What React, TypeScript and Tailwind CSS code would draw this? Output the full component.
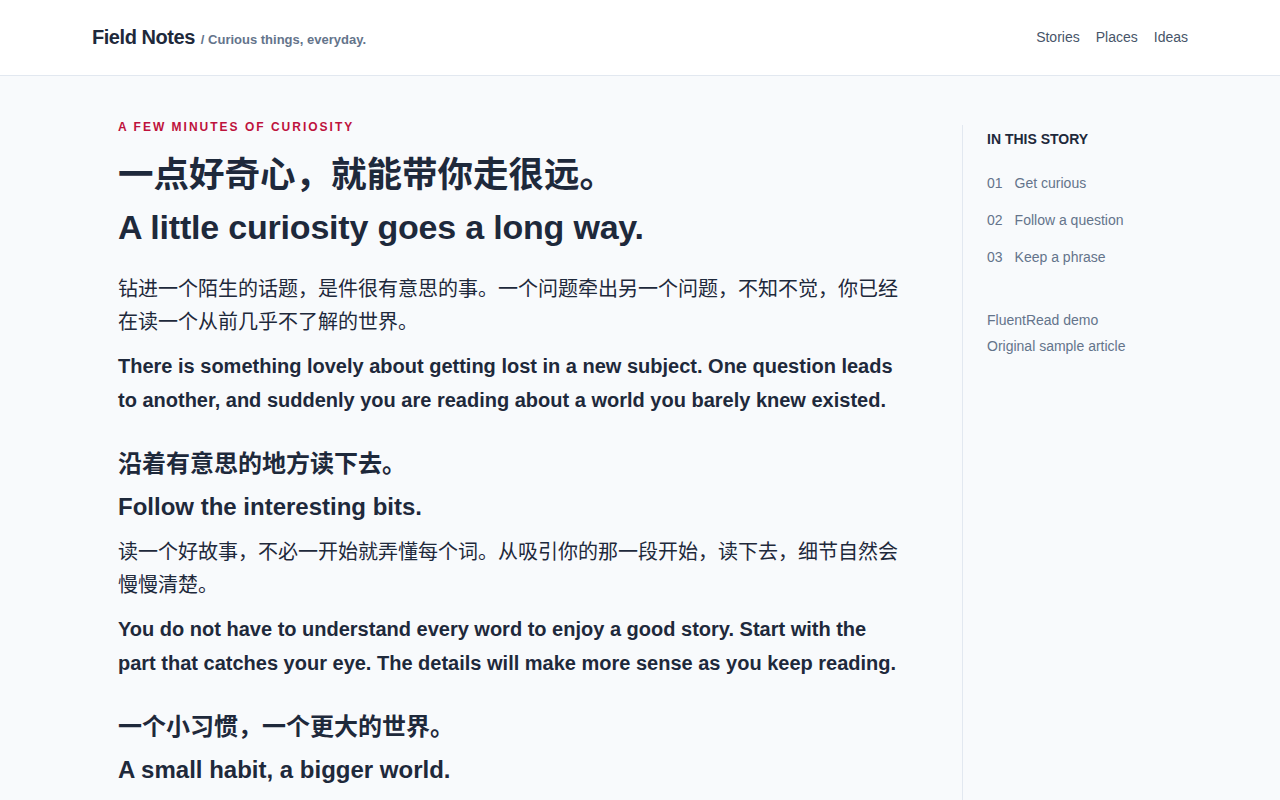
const font = { fontFamily: '"Liberation Sans", Arial, "Noto Sans CJK SC", sans-serif' };

const toc = [
    { n: '01', label: 'Get curious' },
    { n: '02', label: 'Follow a question' },
    { n: '03', label: 'Keep a phrase' },
];

export default function App() {
    return (
        <div className="min-h-screen bg-[#f8fafc] text-[#1e293b]" style={font}>
            {/* Header */}
            <header className="h-[76px] bg-white border-b border-[#e2e8f0]">
                <div className="w-[1096px] mx-auto h-full flex items-center justify-between pb-[2px]">
                    <div className="flex items-baseline gap-[6px]">
                        <span className="text-[20px] font-bold tracking-[-0.45px] text-[#1e293b]">Field Notes</span>
                        <span className="text-[13px] font-semibold text-[#64748b]">/ Curious things, everyday.</span>
                    </div>
                    <nav className="flex items-center gap-[16px] pt-[2px] text-[14px] text-[#475569]">
                        <a>Stories</a>
                        <a>Places</a>
                        <a>Ideas</a>
                    </nav>
                </div>
            </header>

            <div className="w-[1096px] mx-auto flex pt-[49px]">
                {/* Article */}
                <main className="w-[870px] pl-[26px] pr-[60px]">
                    <p className="-mt-[6px] text-[12px] font-bold tracking-[2px] text-[#be123c] leading-[16px]">
                        A FEW MINUTES OF CURIOSITY
                    </p>
                    <h1 className="mt-[16px] text-[35.5px] font-bold leading-[48px]">一点好奇心，就能带你走很远。</h1>
                    <h1 className="mt-[4px] text-[34px] font-bold leading-[48px] tracking-[-0.2px]">A little curiosity goes a long way.</h1>

                    <p className="mt-[22px] text-[20px] leading-[33px]">
                        钻进一个陌生的话题，是件很有意思的事。一个问题牵出另一个问题，不知不觉，你已经在读一个从前几乎不了解的世界。
                    </p>
                    <p className="mt-[10px] text-[20px] font-bold leading-[34px]">
                        There is something lovely about getting lost in a new subject. One question leads to another, and suddenly you are reading about a world you barely knew existed.
                    </p>

                    <h2 className="mt-[30px] text-[24px] font-bold leading-[34px]">沿着有意思的地方读下去。</h2>
                    <h2 className="mt-[9px] text-[24px] font-bold leading-[34px]">Follow the interesting bits.</h2>

                    <p className="mt-[12px] text-[20px] leading-[33px]">
                        读一个好故事，不必一开始就弄懂每个词。从吸引你的那一段开始，读下去，细节自然会慢慢清楚。
                    </p>
                    <p className="mt-[10px] text-[20px] font-bold leading-[34px]">
                        You do not have to understand every word to enjoy a good story. Start with the part that catches your eye. The details will make more sense as you keep reading.
                    </p>

                    <h2 className="mt-[30px] text-[24px] font-bold leading-[34px]">一个小习惯，一个更大的世界。</h2>
                    <h2 className="mt-[9px] text-[24px] font-bold leading-[34px]">A small habit, a bigger world.</h2>
                </main>

                {/* Sidebar */}
                <aside className="flex-1 border-l border-[#e2e8f0] pl-[24px] pt-[4px] min-h-[700px]">
                    <h3 className="text-[14px] font-bold leading-[20px] text-[#1e293b]">IN THIS STORY</h3>
                    <ul className="mt-[24px] flex flex-col gap-[17px] text-[14px] leading-[20px] text-[#64748b]">
                        {toc.map((item) => (
                            <li key={item.n} className="flex gap-[12px]">
                                <span>{item.n}</span>
                                <span>{item.label}</span>
                            </li>
                        ))}
                    </ul>
                    <div className="mt-[43px] flex flex-col gap-[6px] text-[14px] leading-[20px] text-[#64748b]">
                        <span>FluentRead demo</span>
                        <span>Original sample article</span>
                    </div>
                </aside>
            </div>
        </div>
    );
}
